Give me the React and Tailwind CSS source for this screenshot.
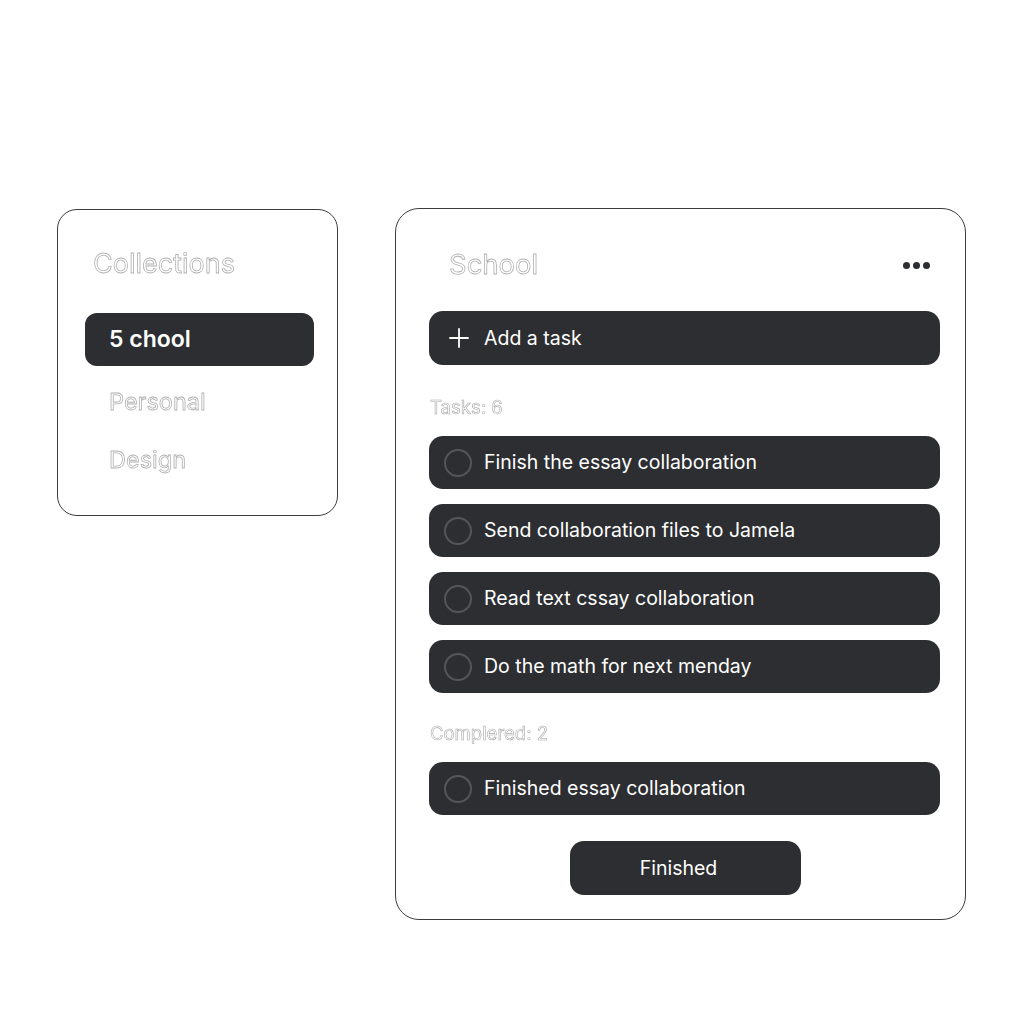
import React from "react";

const outline = "text-white [-webkit-text-stroke:0.8px_#b0b0b0] opacity-[0.99] [will-change:transform]";
const outlineSm = "text-white [-webkit-text-stroke:0.6px_#a8a8a8] opacity-[0.99] [will-change:transform]";

function Circle() {
  return <span className="w-[28px] h-[28px] rounded-full border-2 border-[#55565a] shrink-0" />;
}

function TaskRow({ text }) {
  return (
    <div className="h-[53px] rounded-[14px] bg-[#2d2e31] flex items-center pl-[15px] gap-[12px]">
      <Circle />
      <span className="text-white text-[19.5px] leading-none mt-px">{text}</span>
    </div>
  );
}

export default function App() {
  return (
    <div className="min-h-[1024px] w-[1024px] bg-white [font-family:Inter,'Noto_Sans',sans-serif] antialiased">
      <div className="flex items-start pt-[208px] pl-[57px] gap-[57px]">
        {/* Left card */}
        <div className="mt-px w-[281px] h-[307px] border border-[#3c3c3c] rounded-[20px] flex flex-col">
          <div className={`mt-[38px] ml-[35px] text-[27px] leading-[32px] ${outline}`}>Collections</div>
          <div className="mt-[33px] ml-[27px] w-[229px] h-[53px] rounded-[12px] bg-[#2d2e31] flex items-center pl-[24px]">
            <span className="text-white text-[23px] font-semibold leading-none">5 chool</span>
          </div>
          <div className={`mt-[21px] ml-[51px] text-[23.5px] leading-[30px] ${outline}`}>Personal</div>
          <div className={`mt-[28px] ml-[51px] text-[23.5px] leading-[30px] ${outline}`}>Design</div>
        </div>

        {/* Right card */}
        <div className="w-[571px] border border-[#3c3c3c] rounded-[24px] flex flex-col pl-[33px] pr-[25px] pt-[39px] pb-[24px]">
          <div className="flex items-center justify-between h-[32px] pl-[20px] pr-[10px]">
            <span className={`text-[27.5px] leading-[32px] ${outline}`}>School</span>
            <div className="flex gap-[3px] mt-[2px]">
              <span className="w-[7px] h-[7px] rounded-full bg-[#2d2e31]" />
              <span className="w-[7px] h-[7px] rounded-full bg-[#2d2e31]" />
              <span className="w-[7px] h-[7px] rounded-full bg-[#2d2e31]" />
            </div>
          </div>

          <div className="mt-[31px] h-[54px] rounded-[14px] bg-[#2d2e31] flex items-center pl-[20px] gap-[15px]">
            <svg width="20" height="20" viewBox="0 0 20 20" className="shrink-0">
              <path d="M10 1v18M1 10h18" stroke="white" strokeWidth="1.8" strokeLinecap="round" />
            </svg>
            <span className="text-white text-[19.5px] leading-none mt-px">Add a task</span>
          </div>

          <div className={`mt-[32px] pl-px text-[18.5px] leading-[20px] ${outlineSm}`}>Tasks: 6</div>

          <div className="mt-[19px] flex flex-col gap-[15px]">
            <TaskRow text="Finish the essay collaboration" />
            <TaskRow text="Send collaboration files to Jamela" />
            <TaskRow text="Read text cssay collaboration" />
            <TaskRow text="Do the math for next menday" />
          </div>

          <div className={`mt-[30px] pl-px text-[18.5px] leading-[20px] ${outlineSm}`}>Complered: 2</div>

          <div className="mt-[19px]">
            <TaskRow text="Finished essay collaboration" />
          </div>

          <div className="mt-[26px] self-center ml-[2px] w-[231px] h-[54px] rounded-[14px] bg-[#2d2e31] flex items-center justify-center">
            <span className="text-white text-[19.5px] leading-none -ml-[14px] mt-px">Finished</span>
          </div>
        </div>
      </div>
    </div>
  );
}
